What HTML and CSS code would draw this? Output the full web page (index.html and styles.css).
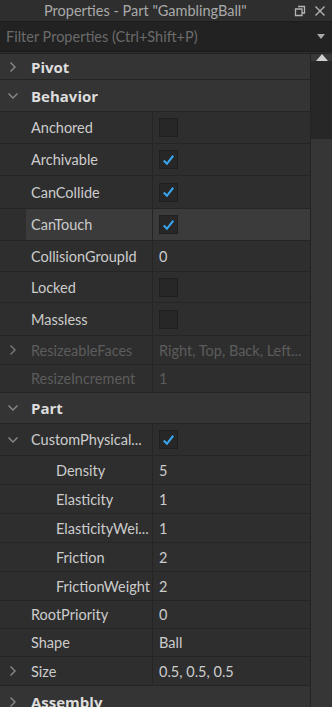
FILE: index.html
```html
<!DOCTYPE html>
<html lang="en">
<head>
  <meta charset="UTF-8">
  <meta name="viewport" content="width=device-width, initial-scale=1.0">
  <title>Properties</title>
  <link rel="stylesheet" href="styles.css">
</head>
<body>

  <!-- Properties panel -->
  <div class="panel">
    <!-- Title bar -->
    <div class="titlebar">
      <span class="title">Properties - Part "GamblingBall"</span>
      <span class="tb-icons">
        <svg width="12" height="12" viewBox="0 0 12 12"><path d="M4 1.5h6.5v6.5H8.5M1.5 4h6.5v6.5H1.5z" fill="none" stroke="#b4b4b4" stroke-width="1.3"/></svg>
        <svg width="12" height="12" viewBox="0 0 12 12"><path d="M1.5 1.5l9 9M10.5 1.5l-9 9" stroke="#b4b4b4" stroke-width="1.4"/></svg>
      </span>
    </div>

    <!-- Filter box -->
    <div class="filter">
      <span>Filter Properties (Ctrl+Shift+P)</span>
      <svg width="8" height="5" viewBox="0 0 8 5"><path d="M0 0h8L4 5z" fill="#a8a8a8"/></svg>
    </div>

    <div class="body">
      <div class="list">
        <div class="row cat first"><span class="chev"><svg width="8" height="12" viewBox="0 0 8 12"><path d="M1.5 1.5l4.5 4.5-4.5 4.5" fill="none" stroke="#8a8a8a" stroke-width="1.4"/></svg></span>Pivot</div>
        <div class="row cat"><span class="chev"><svg width="12" height="8" viewBox="0 0 12 8"><path d="M1.5 1.5l4.5 4.5 4.5-4.5" fill="none" stroke="#8a8a8a" stroke-width="1.4"/></svg></span>Behavior</div>

        <div class="row"><div class="name">Anchored</div><div class="val"><span class="box"></span></div></div>
        <div class="row"><div class="name">Archivable</div><div class="val"><span class="box"><svg width="18" height="18" viewBox="0 0 18 18"><path d="M4 9.5l3.3 3.5L14 4.5" fill="none" stroke="#3aa4ef" stroke-width="2.2"/></svg></span></div></div>
        <div class="row tall"><div class="name">CanCollide</div><div class="val"><span class="box"><svg width="18" height="18" viewBox="0 0 18 18"><path d="M4 9.5l3.3 3.5L14 4.5" fill="none" stroke="#3aa4ef" stroke-width="2.2"/></svg></span></div></div>
        <div class="row hover"><div class="name">CanTouch</div><div class="val"><span class="box"><svg width="18" height="18" viewBox="0 0 18 18"><path d="M4 9.5l3.3 3.5L14 4.5" fill="none" stroke="#3aa4ef" stroke-width="2.2"/></svg></span></div></div>
        <div class="row mid"><div class="name">CollisionGroupId</div><div class="val">0</div></div>
        <div class="row mid"><div class="name">Locked</div><div class="val"><span class="box"></span></div></div>
        <div class="row tall"><div class="name">Massless</div><div class="val"><span class="box"></span></div></div>
        <div class="row sm off"><div class="name"><span class="chev"><svg width="8" height="12" viewBox="0 0 8 12"><path d="M1.5 1.5l4.5 4.5-4.5 4.5" fill="none" stroke="#7a7a7a" stroke-width="1.4"/></svg></span>ResizeableFaces</div><div class="val">Right, Top, Back, Left...</div></div>
        <div class="row xs off"><div class="name">ResizeIncrement</div><div class="val">1</div></div>

        <div class="row cat part"><span class="chev"><svg width="12" height="8" viewBox="0 0 12 8"><path d="M1.5 1.5l4.5 4.5 4.5-4.5" fill="none" stroke="#8a8a8a" stroke-width="1.4"/></svg></span>Part</div>
        <div class="row"><div class="name"><span class="chev"><svg width="12" height="8" viewBox="0 0 12 8"><path d="M1.5 1.5l4.5 4.5 4.5-4.5" fill="none" stroke="#8a8a8a" stroke-width="1.4"/></svg></span>CustomPhysical...</div><div class="val"><span class="box"><svg width="18" height="18" viewBox="0 0 18 18"><path d="M4 9.5l3.3 3.5L14 4.5" fill="none" stroke="#3aa4ef" stroke-width="2.2"/></svg></span></div></div>
        <div class="row sm child"><div class="name">Density</div><div class="val">5</div></div>
        <div class="row sm child"><div class="name">Elasticity</div><div class="val">1</div></div>
        <div class="row sm child"><div class="name">ElasticityWei...</div><div class="val">1</div></div>
        <div class="row sm child"><div class="name">Friction</div><div class="val">2</div></div>
        <div class="row sm child"><div class="name">FrictionWeight</div><div class="val">2</div></div>
        <div class="row xs"><div class="name">RootPriority</div><div class="val">0</div></div>
        <div class="row xs"><div class="name">Shape</div><div class="val">Ball</div></div>
        <div class="row sm"><div class="name"><span class="chev"><svg width="8" height="12" viewBox="0 0 8 12"><path d="M1.5 1.5l4.5 4.5-4.5 4.5" fill="none" stroke="#8a8a8a" stroke-width="1.4"/></svg></span>Size</div><div class="val">0.5, 0.5, 0.5</div></div>

        <div class="row cat"><span class="chev"><svg width="8" height="12" viewBox="0 0 8 12"><path d="M1.5 1.5l4.5 4.5-4.5 4.5" fill="none" stroke="#8a8a8a" stroke-width="1.4"/></svg></span>Assembly</div>
      </div>

      <!-- Scrollbar -->
      <div class="scrollbar">
        <div class="sb-up"><svg width="12" height="7" viewBox="0 0 12 7"><path d="M0 7h12L6 0z" fill="#cfcfcf"/></svg></div>
        <div class="sb-track"><div class="sb-thumb"></div></div>
      </div>
    </div>
  </div>

</body>
</html>
```

FILE: styles.css
```css
body {
  margin: 0;
  padding: 0;
  background: #2e2e2e;
  font-family: 'Lato', 'Open Sans', sans-serif;
  font-size: 14.5px;
  color: #cccccc;
  overflow: hidden;
}

.panel {
  width: 332px;
  height: 707px;
  display: flex;
  flex-direction: column;
  background: #2e2e2e;
}

/* Title bar */
.titlebar {
  flex-shrink: 0;
  height: 21px;
  display: flex;
  align-items: center;
  justify-content: space-between;
  padding-left: 44px;
  padding-right: 6px;
  background: #2e2e2e;
  box-sizing: border-box;
}

.title {
  color: #a9a9a9;
  font-size: 14.5px;
}

.tb-icons {
  display: flex;
  gap: 8px;
  align-items: center;
}

/* Filter box */
.filter {
  flex-shrink: 0;
  height: 31px;
  display: flex;
  align-items: center;
  justify-content: space-between;
  padding: 0 7px 0 6px;
  background: #222222;
  border-top: 1px solid #1c1c1c;
  border-bottom: 1px solid #1c1c1c;
  color: #6b6b6b;
  box-sizing: border-box;
}

.body {
  flex-grow: 1;
  min-height: 0;
  display: flex;
  margin-top: 1px;
  border-top: 1px solid #232323;
  overflow: hidden;
}

.list {
  width: 310px;
  flex-shrink: 0;
  border-right: 1px solid #232323;
}

/* Property rows */
.row {
  height: 32px;
  display: grid;
  grid-template-columns: 153px 1fr;
  border-bottom: 1px solid #252525;
  box-sizing: border-box;
  background: #2e2e2e;
}

.row.tall { height: 33px; }
.row.mid { height: 31px; }
.row.sm { height: 29px; }
.row.xs { height: 28px; }

.name {
  position: relative;
  display: flex;
  align-items: center;
  padding-left: 31px;
  border-right: 1px solid #252525;
  white-space: nowrap;
  overflow: hidden;
}

.val {
  display: flex;
  align-items: center;
  padding-left: 6px;
  white-space: nowrap;
  overflow: hidden;
}

.child .name {
  padding-left: 56px;
}

.off {
  color: #5c5c5c;
}

.hover .name {
  background: linear-gradient(to right, #2e2e2e 26px, #3b3b3b 26px);
}

.hover .val {
  background: #3b3b3b;
}

.chev {
  position: absolute;
  left: 0;
  top: 0;
  bottom: 0;
  width: 26px;
  display: flex;
  align-items: center;
  justify-content: center;
}

/* Category headers */
.row.cat {
  display: flex;
  align-items: center;
  position: relative;
  padding-left: 31px;
  background: #343434;
  font-family: 'Open Sans', sans-serif;
  font-size: 15px;
  font-weight: bold;
  color: #dddddd;
}

.row.cat.first { height: 26px; }
.row.cat.part { height: 31px; }

.box {
  width: 17px;
  height: 17px;
  background: #272727;
  border: 1px solid #1f1f1f;
  display: flex;
  align-items: center;
  justify-content: center;
}

/* Scrollbar */
.scrollbar {
  width: 21px;
  flex-shrink: 0;
  display: flex;
  flex-direction: column;
  background: #272727;
  border-right: 2px solid #222222;
}

.sb-up {
  height: 22px;
  background: #383838;
  display: flex;
  align-items: center;
  justify-content: center;
}

.sb-track {
  flex-grow: 1;
  padding-top: 78px;
}

.sb-thumb {
  height: 600px;
  background: #363636;
}
```
